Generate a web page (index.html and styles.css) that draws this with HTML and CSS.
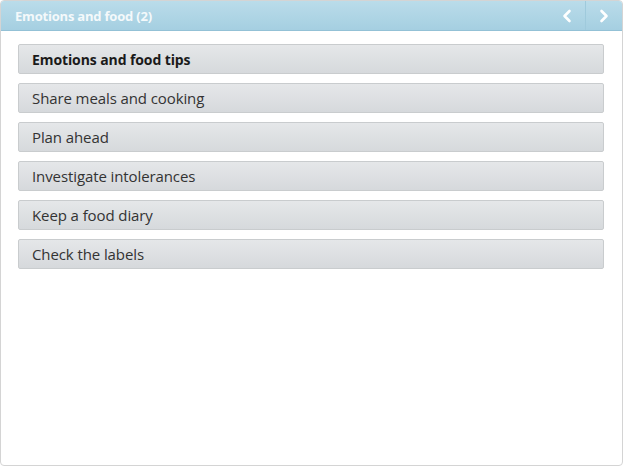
FILE: index.html
```html
<!DOCTYPE html>
<html>
<head>
<meta charset="utf-8">
<link rel="stylesheet" href="styles.css">
</head>
<body>
<div class="panel">
  <div class="header">
    <div class="title">Emotions and food (2)</div>
    <div class="nav">
      <div class="nav-btn">
        <svg width="12" height="14" viewBox="0 0 12 14"><path d="M8.5 2 L3.5 7 L8.5 12" fill="none" stroke="#fff" stroke-width="2.6" stroke-linecap="round" stroke-linejoin="round"/></svg>
      </div>
      <div class="nav-sep"></div>
      <div class="nav-btn">
        <svg width="12" height="14" viewBox="0 0 12 14"><path d="M3.5 2 L8.5 7 L3.5 12" fill="none" stroke="#fff" stroke-width="2.6" stroke-linecap="round" stroke-linejoin="round"/></svg>
      </div>
    </div>
  </div>
  <div class="list">
    <div class="item item-bold">Emotions and food tips</div>
    <div class="item">Share meals and cooking</div>
    <div class="item">Plan ahead</div>
    <div class="item">Investigate intolerances</div>
    <div class="item">Keep a food diary</div>
    <div class="item">Check the labels</div>
  </div>
</div>
</body>
</html>
```
FILE: styles.css
```css
html, body {
  margin: 0;
  padding: 0;
  background: #fff;
}
.panel {
  width: 621px;
  height: 464px;
  border: 1px solid #d4d4d4;
  border-radius: 4px;
  overflow: hidden;
  box-sizing: content-box;
  background: #fff;
}
.header {
  height: 29px;
  background: linear-gradient(#badcea, #a5cfe1);
  border-bottom: 1px solid #93c1d6;
  display: flex;
  align-items: center;
  justify-content: space-between;
  padding-left: 14px;
}
.title {
  font-family: "Open Sans", sans-serif;
  font-weight: bold;
  font-size: 13px;
  color: #f4f9fb;
  letter-spacing: -0.2px;
}
.nav {
  display: flex;
  align-items: center;
  height: 100%;
}
.nav-btn {
  width: 36px;
  height: 100%;
  display: flex;
  align-items: center;
  justify-content: center;
}
.nav-sep {
  width: 1px;
  height: 100%;
  background: #9fcadc;
}
.list {
  padding: 13px 18px 0 17px;
  display: flex;
  flex-direction: column;
  gap: 9px;
}
.item {
  height: 28px;
  border: 1px solid #c9ccce;
  border-radius: 2px;
  background: linear-gradient(#e5e7e9, #d6d9dc);
  display: flex;
  align-items: center;
  padding-left: 13px;
  font-family: "Open Sans", sans-serif;
  font-size: 15px;
  letter-spacing: -0.1px;
  color: #333;
}
.item-bold {
  font-weight: bold;
  font-size: 14px;
  letter-spacing: -0.1px;
  color: #1a1a1a;
}
```
